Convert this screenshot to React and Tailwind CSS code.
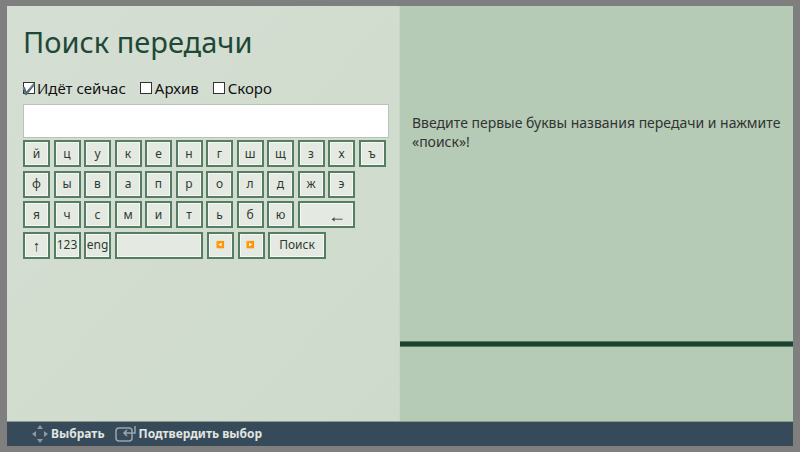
import React from 'react';

const rows = [
  ['й','ц','у','к','е','н','г','ш','щ','з','х','ъ'],
  ['ф','ы','в','а','п','р','о','л','д','ж','э'],
  ['я','ч','с','м','и','т','ь','б','ю'],
];

function Key({ children, className = 'w-[27px]' }) {
  return (
    <div className={`${className} h-[27px] shrink-0 flex items-center justify-center bg-[#e4eae2] border-2 border-[#557d64] text-[12px] text-[#2d3a33] shadow-[inset_0_0_0_1px_#f4f7f3]`}>
      {children}
    </div>
  );
}

function Box({ checked }) {
  return (
    <span className="w-[12px] h-[12px] border border-[#333] bg-white flex items-center justify-center text-[11px] leading-none text-black">
      {checked ? '✔' : ''}
    </span>
  );
}

export default function App() {
  return (
    <div className="w-[800px] h-[452px] bg-[#7f7f7f] p-[6px] pl-[7px] pr-[7px] font-['Open_Sans',sans-serif]">
      <div className="w-full h-full flex flex-col">
        <div className="flex flex-1">
          <div className="w-[392px] bg-gradient-to-br from-[#d5ded3] to-[#cedbcc] px-4 pt-[16px]">
            <h1 className="text-[29px] leading-[40px] text-[#1e4936] font-['Noto_Sans',sans-serif]">Поиск передачи</h1>
            <div className="flex items-center mt-[16px] text-[15px] text-[#111] h-[20px]">
              <label className="flex items-center gap-[2px]"><Box checked />Идёт сейчас</label>
              <label className="flex items-center gap-[3px] ml-[14px]"><Box />Архив</label>
              <label className="flex items-center gap-[3px] ml-[14px]"><Box />Скоро</label>
            </div>
            <div className="mt-[6px] w-[366px] h-[34px] bg-white border border-[#b8c4b6]"></div>
            <div className="mt-[2px] flex flex-col gap-[3.5px]">
              {rows.map((r, i) => (
                <div key={i} className="flex gap-[3.5px]">
                  {r.map(k => <Key key={k}>{k}</Key>)}
                  {i === 2 && <Key className="w-[57px]"><span className="pl-[22px] text-[18px] leading-none">←</span></Key>}
                </div>
              ))}
              <div className="flex gap-[3.5px]">
                <Key><span className="text-[15px]">↑</span></Key>
                <Key>123</Key>
                <Key>eng</Key>
                <Key className="w-[88px]"></Key>
                <Key className="w-[27px] ml-[1px]"><span className="text-[7px]">◀</span></Key>
                <Key><span className="text-[7px]">▶</span></Key>
                <Key className="w-[58px]">Поиск</Key>
              </div>
            </div>
          </div>
          <div className="flex-1 bg-[#b5cbb6] border-l border-[#c9d6c7] flex flex-col">
            <p className="px-[12px] pt-[107px] text-[14px] leading-[19px] text-[#333]">Введите первые буквы названия передачи и нажмите «поиск»!</p>
            <div className="mt-[190px] h-[6px] bg-[#1b4430] border-y border-[#5b7a66]"></div>
          </div>
        </div>
        <div className="h-[25px] bg-[#374a5a] border-t border-[#8a9a8c] flex items-center pl-[24px] gap-[10px] font-['Liberation_Serif',serif] text-[12px] font-bold text-[#e0e6e0]">
          <div className="flex items-center gap-[2px]">
            <svg width="18" height="20" viewBox="0 0 18 20" fill="#8e9aa3">
              <path d="M9 1l3 4H6z M9 19l3-4H6z M1 10l4-3v6z M17 10l-4-3v6z" />
            </svg>
            <span>Выбрать</span>
          </div>
          <div className="flex items-center gap-[2px]">
            <svg width="22" height="18" viewBox="0 0 22 18" fill="none" stroke="#9aa5ad" strokeWidth="1.5">
              <rect x="1" y="3" width="16" height="13" rx="3" />
              <path d="M20 1v7H9 M12 5l-3 3 3 3" />
            </svg>
            <span>Подтвердить выбор</span>
          </div>
        </div>
      </div>
    </div>
  );
}
